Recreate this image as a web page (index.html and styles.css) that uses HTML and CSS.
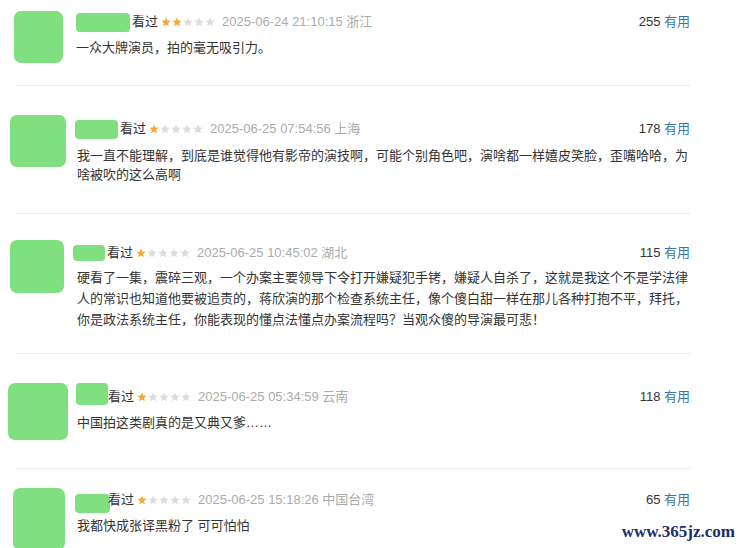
FILE: index.html
```html
<!DOCTYPE html>
<html lang="zh-CN">

<head>
  <meta charset="UTF-8" />
  <meta name="viewport" content="width=device-width, initial-scale=1.0" />
  <title>短评</title>
  <link rel="stylesheet" href="styles.css">
</head>

<body>

  <svg class="defs" width="0" height="0">
    <symbol id="star" viewBox="0 0 10 10">
      <path d="M5 0.4 6.3 3.5 9.6 3.7 7.1 5.9 7.9 9.2 5 7.4 2.1 9.2 2.9 5.9 0.4 3.7 3.7 3.5Z" />
    </symbol>
  </svg>

  <main class="comments">

    <article class="comment c1">
      <div class="avatar"></div>
      <div class="content">
        <header class="meta">
          <span class="name"></span>
          <span class="seen">看过</span>
          <span class="stars">
            <svg class="on"><use href="#star" /></svg><svg class="on"><use href="#star" /></svg><svg><use href="#star" /></svg><svg><use href="#star" /></svg><svg><use href="#star" /></svg>
          </span>
          <span class="time">2025-06-24 21:10:15 浙江</span>
          <span class="votes">255 <a class="useful">有用</a></span>
        </header>
        <p class="text">一众大牌演员，拍的毫无吸引力。</p>
      </div>
    </article>

    <article class="comment c2">
      <div class="avatar"></div>
      <div class="content">
        <header class="meta">
          <span class="name"></span>
          <span class="seen">看过</span>
          <span class="stars">
            <svg class="on"><use href="#star" /></svg><svg><use href="#star" /></svg><svg><use href="#star" /></svg><svg><use href="#star" /></svg><svg><use href="#star" /></svg>
          </span>
          <span class="time">2025-06-25 07:54:56 上海</span>
          <span class="votes">178 <a class="useful">有用</a></span>
        </header>
        <p class="text">我一直不能理解，到底是谁觉得他有影帝的演技啊，可能个别角色吧，演啥都一样嬉皮笑脸，歪嘴哈哈，为啥被吹的这么高啊</p>
      </div>
    </article>

    <article class="comment c3">
      <div class="avatar"></div>
      <div class="content">
        <header class="meta">
          <span class="name"></span>
          <span class="seen">看过</span>
          <span class="stars">
            <svg class="on"><use href="#star" /></svg><svg><use href="#star" /></svg><svg><use href="#star" /></svg><svg><use href="#star" /></svg><svg><use href="#star" /></svg>
          </span>
          <span class="time">2025-06-25 10:45:02 湖北</span>
          <span class="votes">115 <a class="useful">有用</a></span>
        </header>
        <p class="text">硬看了一集，震碎三观，一个办案主要领导下令打开嫌疑犯手铐，嫌疑人自杀了，这就是我这个不是学法律人的常识也知道他要被追责的，蒋欣演的那个检查系统主任，像个傻白甜一样在那儿各种打抱不平，拜托，你是政法系统主任，你能表现的懂点法懂点办案流程吗？当观众傻的导演最可悲！</p>
      </div>
    </article>

    <article class="comment c4">
      <div class="avatar"></div>
      <div class="content">
        <header class="meta">
          <span class="name"></span>
          <span class="seen">看过</span>
          <span class="stars">
            <svg class="on"><use href="#star" /></svg><svg><use href="#star" /></svg><svg><use href="#star" /></svg><svg><use href="#star" /></svg><svg><use href="#star" /></svg>
          </span>
          <span class="time">2025-06-25 05:34:59 云南</span>
          <span class="votes">118 <a class="useful">有用</a></span>
        </header>
        <p class="text">中国拍这类剧真的是又典又爹……</p>
      </div>
    </article>

    <article class="comment c5">
      <div class="avatar"></div>
      <div class="content">
        <header class="meta">
          <span class="name"></span>
          <span class="seen">看过</span>
          <span class="stars">
            <svg class="on"><use href="#star" /></svg><svg><use href="#star" /></svg><svg><use href="#star" /></svg><svg><use href="#star" /></svg><svg><use href="#star" /></svg>
          </span>
          <span class="time">2025-06-25 15:18:26 中国台湾</span>
          <span class="votes">65 <a class="useful">有用</a></span>
        </header>
        <p class="text">我都快成张译黑粉了 可可怕怕</p>
      </div>
    </article>

  </main>

  <div class="watermark">www.365jz.com</div>

</body>

</html>
```

FILE: styles.css
```css
* {
  box-sizing: border-box;
  margin: 0;
  padding: 0;
}
:root {
  --green: #80df7f;
  --text: #333;
  --muted: #ababab;
  --link: #3a77a8;
  --star-on: #f4a939;
  --star-off: #dcdcdc;
}
html,
body {
  height: 100%;
  overflow: hidden;
}
body {
  background-color: #fff;
  color: var(--text);
  font: 13px/20px "Liberation Sans", "Noto Sans CJK SC", sans-serif;
  position: relative;
}
.defs {
  position: absolute;
}

.comments {
  display: flex;
  flex-direction: column;
}
.comment {
  border-bottom: 1px solid #ececec;
  display: flex;
  align-items: flex-start;
  margin: 0 53px 0 15px;
}
.avatar {
  background-color: var(--green);
  border-radius: 7px;
  flex-shrink: 0;
}
.content {
  flex: 1;
  min-width: 0;
}
.meta {
  align-items: center;
  display: flex;
  height: 22px;
  white-space: nowrap;
}
.name {
  background-color: var(--green);
  border-radius: 4px;
  display: block;
  margin-right: 2px;
}
.seen {
  color: var(--text);
}
.stars {
  display: flex;
  gap: 1px;
  margin: 0 7px 0 3px;
}
.stars svg {
  fill: var(--star-off);
  width: 10px;
  height: 10px;
}
.stars svg.on {
  fill: var(--star-on);
}
.time {
  color: var(--muted);
}
.votes {
  color: var(--text);
  margin-left: auto;
}
.useful {
  color: var(--link);
  text-decoration: none;
}
.text {
  color: var(--text);
}

/* per comment spacing */
.c1 {
  height: 86px;
}
.c1 .avatar {
  margin: 11px 13px 0 -1px;
  width: 49px;
  height: 52px;
}
.c1 .content {
  padding-top: 11px;
}
.c1 .name {
  width: 54px;
  height: 19px;
}
.c1 .text {
  margin-top: 5px;
}

.c2 {
  height: 128px;
}
.c2 .avatar {
  margin: 29px 9px 0 -5px;
  width: 56px;
  height: 52px;
}
.c2 .content {
  padding-top: 32px;
}
.c2 .name {
  width: 43px;
  height: 19px;
}
.c2 .text {
  line-height: 19px;
  margin-top: 6px;
  padding-left: 2px;
}

.c3 {
  height: 140px;
}
.c3 .avatar {
  margin: 26px 9px 0 -5px;
  width: 54px;
  height: 53px;
}
.c3 .content {
  padding-top: 28px;
}
.c3 .name {
  width: 32px;
  height: 16px;
}
.c3 .text {
  line-height: 21px;
  margin-top: 3px;
  padding-left: 4px;
}

.c4 {
  height: 115px;
}
.c4 .avatar {
  margin: 29px 8px 0 -7px;
  width: 60px;
  height: 57px;
}
.c4 .content {
  padding-top: 32px;
}
.c4 .name {
  width: 32px;
  height: 22px;
  margin-top: -6px;
  margin-right: 0;
}
.c4 .text {
  margin-top: 5px;
  padding-left: 1px;
}

.c5 {
  border-bottom: 0;
  height: 90px;
}
.c5 .avatar {
  margin: 19px 10px 0 -2px;
  width: 52px;
  height: 62px;
}
.c5 .content {
  padding-top: 20px;
}
.c5 .name {
  width: 35px;
  height: 19px;
  margin-top: 6px;
  margin-right: -2px;
}
.c5 .text {
  margin-top: 5px;
  padding-left: 2px;
}

.watermark {
  color: #1c2f6e;
  font: bold 17px/1 "Liberation Serif", "DejaVu Serif", serif;
  position: absolute;
  right: 8px;
  bottom: 8px;
}
```
